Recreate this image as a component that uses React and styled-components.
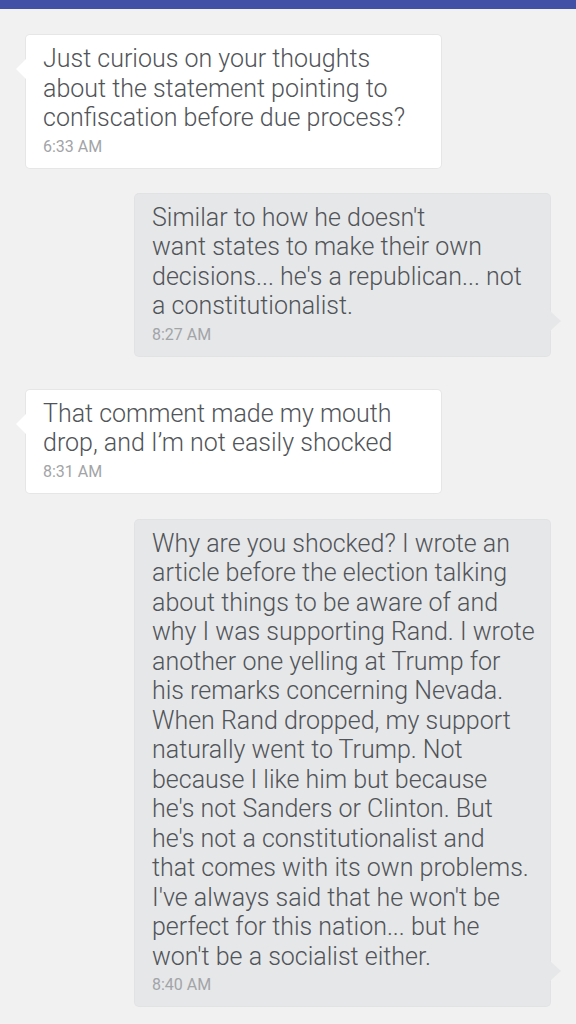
import React from "react";
import styled, { createGlobalStyle } from "styled-components";

const GlobalStyle = createGlobalStyle`
  html, body {
    margin: 0;
    padding: 0;
    background: #f1f1f1;
  }
  body {
    font-family: Roboto, "Noto Sans", sans-serif;
  }
`;

const Screen = styled.div`
  width: 576px;
  min-height: 1024px;
  background: #f1f1f1;
  overflow: hidden;
`;

const TopBar = styled.div`
  height: 9px;
  background: #4152a6;
`;

const Thread = styled.div`
  display: flex;
  flex-direction: column;
  padding: 26px 26px 0;
`;

const Row = styled.div`
  display: flex;
  justify-content: ${(p) => (p.$mine ? "flex-end" : "flex-start")};
  margin-bottom: ${(p) => p.$gap}px;
`;

const Bubble = styled.div`
  position: relative;
  width: 415px;
  box-sizing: border-box;
  padding: 9px 14px 11px 17px;
  border-radius: 4px;
  background: ${(p) => (p.$mine ? "#e6e7e9" : "#ffffff")};
  box-shadow: 0 0 0 1px ${(p) => (p.$mine ? "#e1e2e4" : "#e6e6e6")};

  &::after {
    content: "";
    position: absolute;
    width: 0;
    height: 0;
    border-top: 10px solid transparent;
    border-bottom: 10px solid transparent;
    ${(p) =>
      p.$mine
        ? `right: -11px; bottom: 25px; border-left: 11px solid #e6e7e9;`
        : `left: -10px; top: 24px; border-right: 10px solid #ffffff;`}
  }
`;

const Body = styled.div`
  font-size: 25px;
  font-weight: 300;
  line-height: 29.5px;
  color: #515458;
  white-space: pre-line;
`;

const Time = styled.div`
  margin-top: 4px;
  font-size: 16px;
  line-height: 20px;
  color: #a2a4a7;
`;

const messages = [
  {
    mine: false,
    gap: 26,
    text: "Just curious on your thoughts\nabout the statement pointing to\nconfiscation before due process?",
    time: "6:33 AM",
  },
  {
    mine: true,
    gap: 34,
    text: "Similar to how he doesn't\nwant states to make their own\ndecisions... he's a republican... not\na constitutionalist.",
    time: "8:27 AM",
  },
  {
    mine: false,
    gap: 27,
    text: "That comment made my mouth\ndrop, and I\u2019m not easily shocked",
    time: "8:31 AM",
  },
  {
    mine: true,
    gap: 0,
    text:
      "Why are you shocked? I wrote an\narticle before the election talking\nabout things to be aware of and\nwhy I was supporting Rand. I wrote\nanother one yelling at Trump for\nhis remarks concerning Nevada.\nWhen Rand dropped, my support\nnaturally went to Trump. Not\nbecause I like him but because\nhe's not Sanders or Clinton. But\nhe's not a constitutionalist and\nthat comes with its own problems.\nI've always said that he won't be\nperfect for this nation... but he\nwon't be a socialist either.",
    time: "8:40 AM",
  },
];

export default function App() {
  return (
    <>
      <GlobalStyle />
      <Screen>
        <TopBar />
        <Thread>
          {messages.map((m, i) => (
            <Row key={i} $mine={m.mine} $gap={m.gap}>
              <Bubble $mine={m.mine}>
                <Body>{m.text}</Body>
                <Time>{m.time}</Time>
              </Bubble>
            </Row>
          ))}
        </Thread>
      </Screen>
    </>
  );
}
